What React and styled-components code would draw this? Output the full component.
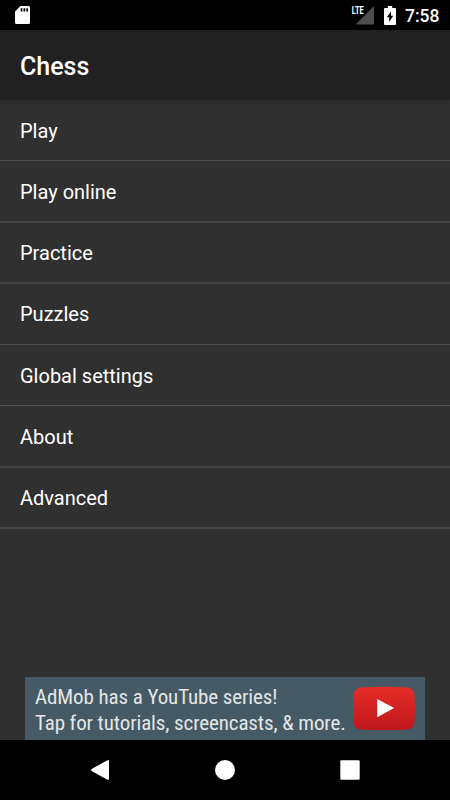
import React from "react";
import styled, { createGlobalStyle } from "styled-components";

const GlobalStyle = createGlobalStyle`
  *, *::before, *::after { box-sizing: border-box; }
  body { margin: 0; background: #303030; }
`;

const Screen = styled.div`
  width: 450px;
  height: 800px;
  display: flex;
  flex-direction: column;
  overflow: hidden;
  background: #303030;
  color: #fff;
  font-family: Roboto, sans-serif;
`;

const StatusBar = styled.header`
  flex: none;
  height: 30px;
  display: flex;
  align-items: center;
  padding: 0 10px 0 15px;
  background: #000;
`;

const StatusIcons = styled.div`
  margin-left: auto;
  display: flex;
  align-items: center;
`;

const Network = styled.svg`
  display: block;
  margin-right: 10px;
`;

const Clock = styled.time`
  width: 35px;
  margin-left: 9px;
  padding-top: 1px;
  font-size: 17.5px;
  font-weight: 500;
  line-height: 30px;
  white-space: nowrap;
`;

const AppBar = styled.div`
  flex: none;
  height: 70px;
  display: flex;
  align-items: center;
  padding: 4px 20px 0;
  background: #212121;
  box-shadow: 0 1px 5px rgba(0, 0, 0, 0.18);
`;

const Title = styled.h1`
  margin: 0;
  font-size: 25px;
  font-weight: 500;
  line-height: 30px;
`;

const Menu = styled.ul`
  flex: 1;
  margin: 0;
  padding: 0;
  list-style: none;
`;

const MenuItem = styled.li`
  height: 61.25px;
  padding: 0.5px 20px 0;
  font-size: 20px;
  line-height: 60px;
  border-bottom: ${({ $soft }) => ($soft ? "2px solid #434343" : "1px solid #505050")};
`;

const Banner = styled.aside`
  flex: none;
  width: 400px;
  height: 63px;
  margin: 0 auto;
  padding: 7px 9px 0 10px;
  display: flex;
  justify-content: space-between;
  background: #455a64;
`;

const BannerCopy = styled.div`
  width: 312px;
  font-family: "Roboto Condensed", Roboto, sans-serif;
  font-stretch: 75%;
  font-size: 21px;
  letter-spacing: -0.1px;
  line-height: 26px;
  color: #e3e6e8;
  white-space: nowrap;
`;

const BannerLine = styled.div``;

const PlayBadge = styled.svg`
  flex: none;
  display: block;
  margin-top: 2px;
`;

const NavBar = styled.nav`
  flex: none;
  height: 60px;
  display: flex;
  justify-content: center;
  align-items: center;
  background: #000;
`;

const NavButton = styled.button`
  width: 125px;
  height: 60px;
  padding: 0;
  border: 0;
  display: grid;
  place-items: center;
  background: transparent;
  color: #fff;
`;

const items = [
  { label: "Play" },
  { label: "Play online", soft: true },
  { label: "Practice", soft: true },
  { label: "Puzzles" },
  { label: "Global settings" },
  { label: "About", soft: true },
  { label: "Advanced", soft: true },
];

export default function App() {
  return (
    <Screen>
      <GlobalStyle />
      <StatusBar>
        <svg width="15" height="18" viewBox="0 0 15 18">
          <path fill="#fff" fillRule="evenodd" d="M5.5 0H13.5Q15 0 15 1.5V16.5Q15 18 13.5 18H1.5Q0 18 0 16.5V5.5ZM5.7 2.2V5.5H7.4V2.2ZM8.5 2.2V5.5H10.2V2.2ZM11.3 2.2V5.5H13V2.2Z" />
        </svg>
        <StatusIcons>
          <Network width="23" height="29" viewBox="0 -5 23 29">
            <path fill="#4d4d4d" d="M23 0V18.5H4.6Z" />
            <text x="0.8" y="8.4" fill="#fff" stroke="#000" strokeWidth="1.4" paintOrder="stroke" fontFamily="Roboto" fontSize="11.5" fontWeight="700" textLength="12" lengthAdjust="spacingAndGlyphs">LTE</text>
          </Network>
          <svg width="12" height="19" viewBox="0 0 12 19">
            <path fill="#fff" fillRule="evenodd" d="M3.8 0H8.2V2H11Q12 2 12 3V18Q12 19 11 19H1Q0 19 0 18V3Q0 2 1 2H3.8ZM7 5.4L2.8 11.3H5.2V16L9.2 9.7H7Z" />
          </svg>
          <Clock>7:58</Clock>
        </StatusIcons>
      </StatusBar>
      <AppBar><Title>Chess</Title></AppBar>
      <Menu>
        {items.map(({ label, soft }) => <MenuItem key={label} $soft={soft}>{label}</MenuItem>)}
      </Menu>
      <Banner>
        <BannerCopy>
          <BannerLine>AdMob has a YouTube series!</BannerLine>
          <BannerLine>Tap for tutorials, screencasts, &amp; more.</BannerLine>
        </BannerCopy>
        <PlayBadge width="64" height="45" viewBox="0 0 64 45">
          <defs>
            <linearGradient id="badge" x1="0" y1="0" x2="0" y2="1">
              <stop offset="0" stopColor="#e52d27" />
              <stop offset="1" stopColor="#bf171d" />
            </linearGradient>
          </defs>
          <path fill="url(#badge)" d="M11 1.2Q32 .4 53 1.2C59.5 1.5 62 4 62.6 9.5Q63.4 22.5 62.6 35.5C62 41 59.5 43.5 53 43.8Q32 44.6 11 43.8C4.5 43.5 2 41 1.4 35.5Q.6 22.5 1.4 9.5C2 4 4.5 1.5 11 1.2Z" />
          <path fill="#fff" d="M25.2 13V31.2L42.2 22.1Z" />
        </PlayBadge>
      </Banner>
      <NavBar>
        <NavButton aria-label="Back">
          <svg width="18" height="20" viewBox="0 0 18 20"><path fill="currentColor" d="M16.4.2Q18-.4 18 1.2V18.8Q18 20.4 16.4 19.8L.6 10.9Q-.3 10 .6 9.1Z" /></svg>
        </NavButton>
        <NavButton aria-label="Home">
          <svg width="20" height="20" viewBox="0 0 20 20"><circle cx="10" cy="10" r="10" fill="currentColor" /></svg>
        </NavButton>
        <NavButton aria-label="Recent apps">
          <svg width="20" height="20" viewBox="0 0 20 20"><rect x=".3" y=".3" width="19.4" height="19.4" rx="1.2" fill="currentColor" /></svg>
        </NavButton>
      </NavBar>
    </Screen>
  );
}
